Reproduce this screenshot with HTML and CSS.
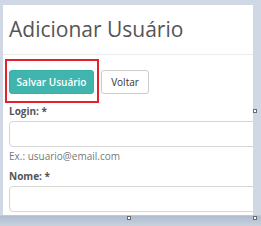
FILE: index.html
```html
<!DOCTYPE html>
<html lang="pt">
  <head>
    <meta charset="UTF-8" />
    <title>Adicionar Usuário</title>
    <link rel="stylesheet" href="styles.css">
  </head>
  <body>
    <div class="frame">
      <div class="panel">
        <h1 class="page-title">Adicionar Usuário</h1>

        <div class="actions">
          <button class="btn btn-save">Salvar Usuário</button>
          <button class="btn btn-back">Voltar</button>
          <!-- destaque do botão -->
          <div class="highlight"></div>
        </div>

        <div class="form-group">
          <label class="field-label">Login: *</label>
          <input class="field-input" type="text" />
          <div class="field-help">Ex.: usuario@email.com</div>
        </div>

        <div class="form-group">
          <label class="field-label">Nome: *</label>
          <input class="field-input" type="text" />
        </div>
      </div>

      <span class="handle handle-right"></span>
      <span class="handle handle-bottom"></span>
      <span class="handle handle-corner"></span>
    </div>
  </body>
</html>
```

FILE: styles.css
```css
body {
  margin: 0;
  padding: 0;
  width: 261px;
  height: 226px;
  overflow: hidden;
  background: #cdd6e3;
  font-family: "Open Sans", "Liberation Sans", sans-serif;
}

.frame {
  position: relative;
  width: 261px;
  height: 226px;
  padding-top: 5px;
  padding-left: 3px;
  box-sizing: border-box;
  background: linear-gradient(to bottom, #cfd8e4 0, #cfd8e4 215px, #aebcd0 216px, #c9d2df 226px);
}

.panel {
  width: 250px;
  height: 210px;
  background: #fff;
  overflow: hidden;
}

.page-title {
  margin: 0;
  height: 50px;
  padding: 10px 0 0 6px;
  box-sizing: border-box;
  border-bottom: 1px solid #ececec;
  font-size: 21px;
  font-weight: normal;
  color: #555;
  line-height: 28px;
}

.actions {
  position: relative;
  display: flex;
  gap: 7px;
  padding: 15px 0 0 6px;
}

.btn {
  height: 24px;
  padding: 0;
  border-radius: 3px;
  font-family: inherit;
  font-size: 10px;
  white-space: nowrap;
  cursor: pointer;
}

.btn-save {
  width: 85px;
  border: 1px solid #3aafa9;
  background: #40b5ae;
  color: #fff;
  font-weight: 600;
}

.btn-back {
  width: 48px;
  border: 1px solid #ccc;
  background: #fff;
  color: #333;
  font-weight: 500;
}

.highlight {
  position: absolute;
  left: 2px;
  top: 4px;
  width: 94px;
  height: 44px;
  box-sizing: border-box;
  border: 2px solid #e3202c;
  pointer-events: none;
}

.form-group {
  padding-left: 6px;
}

.field-label {
  display: block;
  margin-top: 10px;
  font-size: 10px;
  font-weight: bold;
  color: #555;
  line-height: 14px;
}

.form-group + .form-group .field-label {
  margin-top: 6px;
}

.field-input {
  display: block;
  width: 260px;
  height: 26px;
  margin-top: 3px;
  box-sizing: border-box;
  border: 1px solid #d6d6d6;
  border-radius: 4px;
  background: #fff;
}

.field-help {
  margin-top: 2px;
  font-size: 10px;
  color: #777;
  line-height: 14px;
}

.handle {
  position: absolute;
  width: 4px;
  height: 4px;
  box-sizing: border-box;
  border: 1px solid #6a6a6a;
  background: #fff;
}

.handle-right {
  left: 253px;
  top: 109px;
}

.handle-bottom {
  left: 127px;
  top: 216px;
}

.handle-corner {
  left: 253px;
  top: 216px;
}
```
